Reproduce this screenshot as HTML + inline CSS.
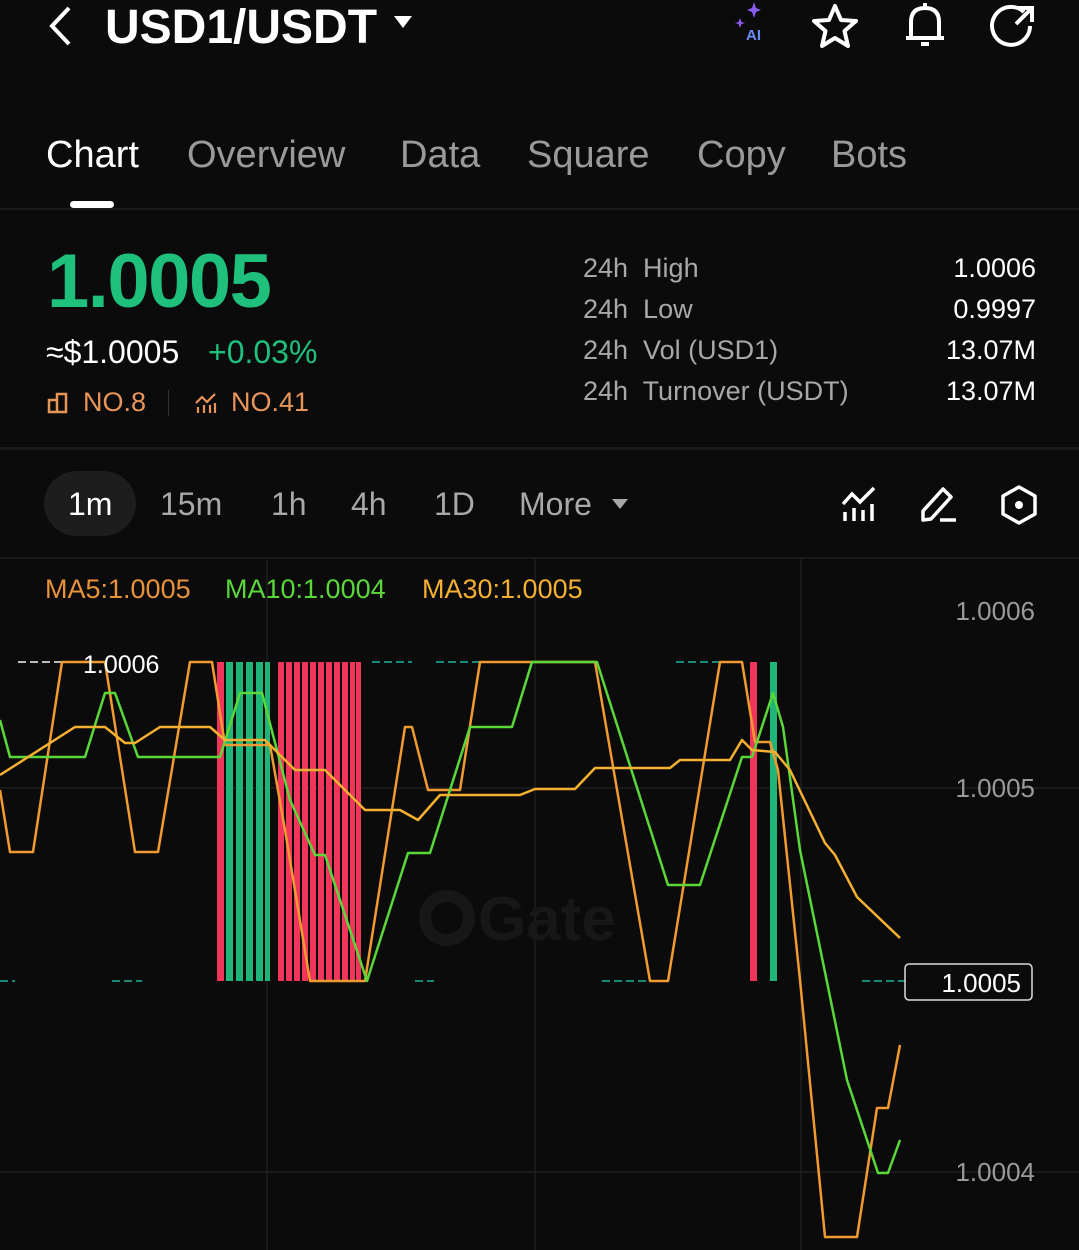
<!DOCTYPE html>
<html><head><meta charset="utf-8"><style>
*{margin:0;padding:0;box-sizing:border-box}
body{width:1079px;height:1250px;background:#0b0b0b;font-family:"Liberation Sans",sans-serif;position:relative;overflow:hidden;color:#fff}
.a{position:absolute;white-space:nowrap}
.tab{font-size:38px;color:#9a9a9a;top:134px}
.lbl{font-size:27px;color:#a8a8a8;left:583px}
.val{font-size:27px;color:#fff;right:43px}
.tf{font-size:32px;color:#a8a8a8;top:486px}
</style></head><body>
<svg class="a" style="left:44px;top:4px" width="32" height="44" viewBox="0 0 32 44"><path d="M25 4 L8 22 L25 40" stroke="#fff" stroke-width="4" fill="none"/></svg>
<div class="a" style="left:105px;top:0px;font-size:48px;font-weight:bold;letter-spacing:0px">USD1/USDT</div>
<svg class="a" style="left:393px;top:14px" width="20" height="16"><path d="M1 2 L19 2 L10 14Z" fill="#fff"/></svg>
<svg class="a" style="left:730px;top:0px" width="40" height="44"><path d="M24 2 L26 8 L31 10 L26 12 L24 18 L22 12 L17 10 L22 8Z" fill="#8a5cf0"/><path d="M10 18 L11.5 22 L15 23 L11.5 24 L10 28 L8.5 24 L5 23 L8.5 22Z" fill="#8a5cf0"/><text x="16" y="40" font-size="15" font-weight="bold" fill="#6b8cf7" font-family="Liberation Sans">AI</text></svg>
<svg class="a" style="left:810px;top:2px" width="50" height="48"><path d="M25 4 L31 18 L46 19 L34.5 29 L38 44 L25 36 L12 44 L15.5 29 L4 19 L19 18Z" stroke="#fff" stroke-width="4" fill="none" stroke-linejoin="round"/></svg>
<svg class="a" style="left:900px;top:0px" width="50" height="52"><path d="M11 38 L11 22 Q11 8 25 8 Q39 8 39 22 L39 38 Z M6 38 L44 38" stroke="#fff" stroke-width="4" fill="none" stroke-linejoin="round"/><path d="M25 3 L25 8 M21 44 L29 44" stroke="#fff" stroke-width="4"/></svg>
<svg class="a" style="left:988px;top:2px" width="50" height="48"><path d="M36 10 A19 19 0 1 0 42 24" stroke="#fff" stroke-width="4" fill="none"/><path d="M30 6 L44 6 L44 20 M44 6 L28 22" stroke="#fff" stroke-width="4" fill="none"/></svg>

<div class="a tab" style="left:46px;color:#fff">Chart</div>
<div class="a tab" style="left:187px">Overview</div>
<div class="a tab" style="left:400px">Data</div>
<div class="a tab" style="left:527px">Square</div>
<div class="a tab" style="left:697px">Copy</div>
<div class="a tab" style="left:831px">Bots</div>
<div class="a" style="left:70px;top:201px;width:44px;height:7px;border-radius:4px;background:#fff"></div>
<div class="a" style="left:0;top:208px;width:1079px;height:2px;background:#1c1c1c"></div>

<div class="a" style="left:47px;top:238px;font-size:76px;font-weight:bold;color:#1ec07c;letter-spacing:-1.5px">1.0005</div>
<div class="a" style="left:46px;top:334px;font-size:32px;color:#fff">≈$1.0005</div>
<div class="a" style="left:208px;top:334px;font-size:32px;color:#1ec07c">+0.03%</div>
<svg class="a" style="left:46px;top:391px" width="24" height="24"><path d="M3 21 L3 9 L11 9 L11 21 Z M11 21 L11 3 L20 3 L20 21 Z" stroke="#e8955a" stroke-width="2.5" fill="none"/></svg>
<div class="a" style="left:83px;top:387px;font-size:27px;color:#e8955a">NO.8</div>
<div class="a" style="left:168px;top:390px;width:1px;height:26px;background:#333"></div>
<svg class="a" style="left:194px;top:391px" width="24" height="24"><path d="M2 12 L8 6 L13 11 L21 3 M4 22 L4 16 M10 22 L10 14 M16 22 L16 14 M21 22 L21 12" stroke="#e8955a" stroke-width="2.2" fill="none"/></svg>
<div class="a" style="left:231px;top:387px;font-size:27px;color:#e8955a">NO.41</div>

<div class="a lbl" style="top:253px">24h&nbsp; High</div>
<div class="a lbl" style="top:294px">24h&nbsp; Low</div>
<div class="a lbl" style="top:335px">24h&nbsp; Vol (USD1)</div>
<div class="a lbl" style="top:376px">24h&nbsp; Turnover (USDT)</div>
<div class="a val" style="top:253px">1.0006</div>
<div class="a val" style="top:294px">0.9997</div>
<div class="a val" style="top:335px">13.07M</div>
<div class="a val" style="top:376px">13.07M</div>
<div class="a" style="left:0;top:447px;width:1079px;height:3px;background:#1a1a1a"></div>

<div class="a" style="left:44px;top:471px;width:92px;height:65px;border-radius:33px;background:#1d1d1d"></div>
<div class="a tf" style="left:68px;color:#fff">1m</div>
<div class="a tf" style="left:160px">15m</div>
<div class="a tf" style="left:271px">1h</div>
<div class="a tf" style="left:351px">4h</div>
<div class="a tf" style="left:434px">1D</div>
<div class="a tf" style="left:519px">More</div>
<svg class="a" style="left:611px;top:497px" width="18" height="14"><path d="M1 2 L17 2 L9 12Z" fill="#a8a8a8"/></svg>
<svg class="a" style="left:840px;top:484px" width="40" height="40"><path d="M3 20 L12 10 L20 18 L34 4" stroke="#fff" stroke-width="3.5" fill="none"/><path d="M5 37 L5 28 M14 37 L14 24 M23 37 L23 26 M32 37 L32 20" stroke="#fff" stroke-width="3.5"/></svg>
<svg class="a" style="left:918px;top:484px" width="42" height="40"><path d="M5 36 L5 27 L25 5 L33 13 L13 35 Z" stroke="#fff" stroke-width="3.5" fill="none" stroke-linejoin="round"/><path d="M22 36 L38 36" stroke="#fff" stroke-width="3.5"/></svg>
<svg class="a" style="left:998px;top:484px" width="42" height="42"><path d="M21 3 L37 12 L37 30 L21 39 L5 30 L5 12 Z" stroke="#fff" stroke-width="3.5" fill="none" stroke-linejoin="round"/><circle cx="21" cy="21" r="4" fill="#fff"/></svg>
<div class="a" style="left:0;top:557px;width:1079px;height:2px;background:#1a1a1a"></div>

<svg class="a" style="left:0;top:559px" width="1079" height="691" viewBox="0 559 1079 691">
<g stroke="#1e1e1e" stroke-width="1.5">
<line x1="267" y1="559" x2="267" y2="1250"/><line x1="535" y1="559" x2="535" y2="1250"/><line x1="801" y1="559" x2="801" y2="1250"/>
<line x1="0" y1="788" x2="1079" y2="788"/><line x1="0" y1="1172" x2="1079" y2="1172"/>
</g>
<g stroke="#1a8a78" stroke-width="2" stroke-dasharray="8 4">
<line x1="18" y1="662" x2="80" y2="662" stroke="#bbb"/><line x1="372" y1="662" x2="412" y2="662"/><line x1="436" y1="662" x2="480" y2="662"/><line x1="676" y1="662" x2="720" y2="662"/>
<line x1="0" y1="981" x2="15" y2="981"/><line x1="112" y1="981" x2="142" y2="981"/><line x1="415" y1="981" x2="434" y2="981"/><line x1="602" y1="981" x2="646" y2="981"/><line x1="862" y1="981" x2="905" y2="981"/>
</g>
<g fill="#1fb578">
<rect x="226" y="662" width="7" height="319"/><rect x="236" y="662" width="7" height="319"/><rect x="246" y="662" width="7" height="319"/><rect x="256" y="662" width="7" height="319"/><rect x="265" y="662" width="5" height="319"/><rect x="770" y="662" width="7" height="319"/>
</g>
<g fill="#f0345a">
<rect x="217" y="662" width="7" height="319"/><rect x="278" y="662" width="6" height="319"/><rect x="286" y="662" width="6" height="319"/><rect x="294" y="662" width="6" height="319"/><rect x="302" y="662" width="6" height="319"/><rect x="310" y="662" width="6" height="319"/><rect x="318" y="662" width="6" height="319"/><rect x="326" y="662" width="6" height="319"/><rect x="334" y="662" width="6" height="319"/><rect x="342" y="662" width="6" height="319"/><rect x="350" y="662" width="5" height="319"/><rect x="356" y="662" width="5" height="319"/><rect x="750" y="662" width="7" height="319"/>
</g>
<circle cx="447" cy="918" r="22" fill="none" stroke="#171717" stroke-width="12"/>
<text x="478" y="940" font-size="62" font-weight="bold" fill="#171717" font-family="Liberation Sans">Gate</text>
<g fill="none" stroke-width="2.5" stroke-linejoin="round">
<polyline stroke="#f09a30" points="0,790 10,852 33,852 62,662 105,662 135,852 158,852 190,662 212,662 225,745 270,745 285,830 310,981 365,981 405,727 412,727 428,790 460,790 480,662 595,662 650,981 668,981 720,662 742,662 755,742 770,742 778,770 800,980 825,1237 857,1237 877,1108 888,1108 900,1045"/>
<polyline stroke="#5ad83a" points="0,720 10,757 85,757 105,693 115,693 138,757 220,757 240,693 262,693 290,800 315,855 325,855 367,981 408,853 430,853 470,727 512,727 532,662 597,662 668,885 700,885 742,757 752,757 773,693 783,727 800,850 847,1080 878,1173 888,1173 900,1140"/>
<polyline stroke="#f5b031" points="0,775 75,727 105,727 125,743 135,743 160,727 210,727 225,740 265,740 295,770 325,770 365,810 400,810 418,820 440,795 520,795 535,789 575,789 595,768 670,768 680,760 730,760 742,740 752,750 775,752 790,770 825,843 835,855 857,897 900,938"/>
</g>
<text x="83" y="673" font-size="25" fill="#fff" font-family="Liberation Sans">1.0006</text>
<text x="45" y="598" font-size="27" fill="#e8923a" font-family="Liberation Sans">MA5:1.0005</text>
<text x="225" y="598" font-size="27" fill="#5ad83a" font-family="Liberation Sans">MA10:1.0004</text>
<text x="422" y="598" font-size="27" fill="#f5b031" font-family="Liberation Sans">MA30:1.0005</text>
<g font-size="26" fill="#9a9a9a" font-family="Liberation Sans" text-anchor="end">
<text x="1035" y="620">1.0006</text><text x="1035" y="797">1.0005</text><text x="1035" y="1181">1.0004</text>
</g>
<rect x="905" y="964" width="127" height="36" rx="4" fill="#0b0b0b" stroke="#ddd" stroke-width="1.5"/>
<text x="1021" y="992" font-size="26" fill="#fff" text-anchor="end" font-family="Liberation Sans">1.0005</text>
</svg>
</body></html>
